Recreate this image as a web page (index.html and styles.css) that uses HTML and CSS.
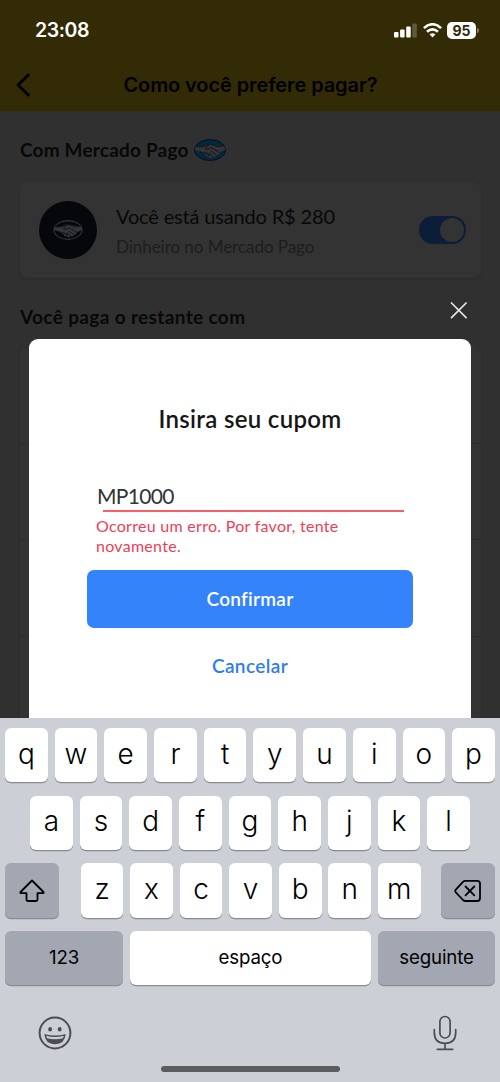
FILE: index.html
```html
<!DOCTYPE html>
<html lang="pt-BR">
<head>
<meta charset="utf-8">
<title>Como você prefere pagar?</title>
<link rel="stylesheet" href="styles.css">
</head>
<body>
<svg width="0" height="0" class="defs">
  <symbol id="handshake" viewBox="0 0 32 22">
    <path class="hands" d="M1.500 7C5 8.500 9.500 7.500 13 5.500C17 4 23 8 30.500 6.500L31 11L25.500 13.500C25.500 16 23 16.500 22.500 16C22 18 20 18.500 19 17.500C18 19.500 15.500 19.500 14.500 17.500C12.500 18.500 11.500 17 11.500 15.500C9.500 15 8 13 6 12.500L1 11Z"/>
    <path class="creases" d="M1.500 7C5 8.500 9 8 12 6.500C15 4.500 18 5.500 20 6.500C23 8 27 8 30.500 6.500M15 6L11 9.500C12 11 15 10 16.500 9L18 9L25.500 13.500M17 12L22.500 16M15 14L19 17.500M6 12.500L9.500 14.500L11 13L12 15L13.500 14L14 16L15.500 15.500L14.500 17.500"/>
  </symbol>
</svg>
<div class="screen">
  <header class="top">
    <div class="status">
      <span class="time">23:08</span>
      <div class="indicators">
        <svg width="23" height="15" viewBox="0 0 23 15" fill="#fff"><rect x="0" y="9" width="4.500" height="5.500" rx="1"/><rect x="6.100" y="6.500" width="4.500" height="8" rx="1"/><rect x="12.200" y="3.500" width="4.500" height="11" rx="1"/><rect x="18.300" y=".5" width="4.500" height="14" rx="1" opacity=".22"/></svg>
        <svg width="19" height="15" viewBox="0 0 19 15" fill="none" stroke="#fff" stroke-width="2.600"><path d="M.9 5.100Q9.500-2.600 18.100 5.100"/><path d="M4 8.700Q9.500 3.900 15 8.700"/><path d="M6.500 11.300L9.500 14.500L12.500 11.300Q9.500 9 6.500 11.300Z" fill="#fff" stroke="none"/></svg>
        <div class="battery"><span class="level">95</span><i class="tip"></i></div>
      </div>
    </div>
    <div class="nav">
      <svg class="back" width="16" height="24" viewBox="0 0 16 24"><path d="M13.300 2L3 12L13.300 22" fill="none" stroke="#000" stroke-width="2.900" stroke-linecap="round" stroke-linejoin="round"/></svg>
      <h1 class="nav-title">Como você prefere pagar?</h1>
    </div>
  </header>
  <main class="content">
    <h2 class="section mp">Com Mercado Pago
      <svg class="mp-logo" width="32" height="22" viewBox="0 0 32 22"><ellipse cx="16" cy="11" rx="15.500" ry="10.500" fill="#02283a" stroke="#080c28"/><use href="#handshake"/></svg>
    </h2>
    <section class="card balance">
      <div class="avatar"><svg width="30" height="22" viewBox="0 0 32 22"><ellipse cx="16" cy="11" rx="15" ry="10" fill="#05070b" stroke="#353535" stroke-width="1.200"/><use href="#handshake"/></svg></div>
      <div class="balance-text">
        <p class="using">Você está usando R$ 280</p>
        <p class="source">Dinheiro no Mercado Pago</p>
      </div>
      <div class="switch"><i class="knob"></i></div>
    </section>
    <h2 class="section rest">Você paga o restante com</h2>
    <section class="card options"><div class="option"></div><div class="option"></div><div class="option"></div><div class="option"></div></section>
  </main>
  <svg class="close" width="20" height="20" viewBox="0 0 20 20"><path d="M2 1.500L17.600 17.100M17.600 1.500L2 17.100" stroke="#e4e4e4" stroke-width="1.700"/></svg>
  <div class="modal">
    <h2 class="modal-title"><span>Insira seu cupom</span></h2>
    <div class="field"><span class="value">MP1000</span></div>
    <p class="error">Ocorreu um erro. Por favor, tente<br>novamente.</p>
    <button class="confirm">Confirmar</button>
    <button class="cancel">Cancelar</button>
  </div>
  <div class="keyboard">
    <div class="row"><span class="key">q</span><span class="key">w</span><span class="key">e</span><span class="key">r</span><span class="key">t</span><span class="key">y</span><span class="key">u</span><span class="key">i</span><span class="key">o</span><span class="key">p</span></div>
    <div class="row middle"><span class="key">a</span><span class="key">s</span><span class="key">d</span><span class="key">f</span><span class="key">g</span><span class="key">h</span><span class="key">j</span><span class="key">k</span><span class="key">l</span></div>
    <div class="row">
      <span class="key dark shift"><svg width="28" height="26" viewBox="0 0 28 26"><path d="M14 2.500L25.500 14Q26 15.200 25 15.200H19.500V21.500Q19.500 23 18 23H10Q8.500 23 8.500 21.500V15.200H3Q2 15.200 2.500 14Z" fill="none" stroke="#000" stroke-width="1.800" stroke-linejoin="round"/></svg></span>
      <span class="key">z</span><span class="key">x</span><span class="key">c</span><span class="key">v</span><span class="key">b</span><span class="key">n</span><span class="key">m</span>
      <span class="key dark erase"><svg width="28" height="24" viewBox="0 0 28 24" fill="none" stroke="#000" stroke-width="1.800" stroke-linecap="round" stroke-linejoin="round"><path d="M11.200 1.800H23.300Q26 1.800 26 4.500V19.300Q26 22 23.300 22H11.200Q10 22 9 21L1.800 13.300Q.6 12 1.800 10.700L9 2.800Q10 1.800 11.200 1.800Z"/><path d="M11.500 7.500L20.300 16.300M20.300 7.500L11.500 16.300"/></svg></span>
    </div>
    <div class="row bottom"><span class="key dark word num">123</span><span class="key word space">espaço</span><span class="key dark word next">seguinte</span></div>
    <div class="tools">
      <svg width="34" height="34" viewBox="0 0 34 34"><circle cx="17" cy="17" r="15.400" fill="none" stroke="#4b4d52" stroke-width="2"/><ellipse cx="12.100" cy="13.300" rx="1.900" ry="2.300" fill="#4b4d52"/><ellipse cx="21.700" cy="13.300" rx="1.900" ry="2.300" fill="#4b4d52"/><path d="M6.400 18Q17 21.200 27.600 18Q27 28.200 17 28.200T6.400 18Z" fill="#4b4d52"/><path d="M8.200 19.700Q17 22.100 25.800 19.700L25 22.300Q17 24 9 22.300Z" fill="#cbced5"/></svg>
      <svg width="26" height="36" viewBox="0 0 26 36" fill="none" stroke="#4b4d52" stroke-width="1.700" stroke-linecap="round"><rect x="7.900" y="1.500" width="10.200" height="21.500" rx="5.100"/><path d="M2.300 14.500V17.500Q2.300 28.300 13 28.300T23.700 17.500V14.500M13 28.300V34.300M5.300 34.300H20.700"/></svg>
    </div>
    <div class="home"></div>
  </div>
</div>
</body>
</html>
```
FILE: styles.css
```css
* { box-sizing: border-box; }
body { margin: 0; font-family: Inter, "Liberation Sans", sans-serif; }
h1, h2, p { margin: 0; font-weight: 400; }
.defs { display: none; }
.screen { position: relative; width: 500px; height: 1082px; overflow: hidden; background: #303030; }

.top { height: 111px; background: #332b06; }
.status { display: flex; justify-content: space-between; height: 60px; padding: 0 21px 0 35px; align-items: center; color: #fff; }
.time { font-size: 19.5px; font-weight: 600; letter-spacing: -.4px; }
.indicators { display: flex; align-items: center; gap: 5.5px; }
.battery { display: flex; align-items: center; gap: 1px; }
.level { width: 29px; height: 17px; border-radius: 5px; background: #fff; color: #332b06; font-size: 14px; line-height: 17px; font-weight: 700; text-align: center; }
.tip { width: 2px; height: 5px; border-radius: 0 2px 2px 0; background: #858064; }
.nav { display: flex; align-items: center; height: 50px; padding-left: 15px; }
.nav-title { width: 470px; padding-right: 30px; text-align: center; color: #000; font-size: 20px; font-weight: 600; letter-spacing: -.1px; }
.back { flex: none; }

.content { padding: 23px 19px 0 20px; font-family: Lato, sans-serif; color: #080808; }
.section { display: flex; align-items: center; gap: 5px; height: 31px; font-size: 19px; font-weight: 700; letter-spacing: .2px; }
.rest { letter-spacing: .36px; }
.card { border-radius: 8px; background: #333; box-shadow: 0 1px 2px #2a2a2a; }
.balance { display: flex; align-items: center; height: 96px; margin: 17px 0 23px; padding: 0 15px 0 19px; }
.avatar { display: flex; align-items: center; justify-content: center; width: 58px; height: 58px; border-radius: 50%; background: #05070b; }
.balance-text { flex: 1; margin-left: 19px; white-space: nowrap; }
.using { font-size: 20px; line-height: 26px; padding-top: 1px; letter-spacing: -.16px; }
.source { font-size: 17px; line-height: 24px; padding-top: 6px; color: #1d1d1d; letter-spacing: -.04px; }
.switch { width: 47px; height: 28px; padding: 2px; border-radius: 14px; background: #0b1d39; display: flex; justify-content: flex-end; }
.knob { width: 24px; height: 24px; border-radius: 50%; background: #333; }
.options { margin-top: 15px; }
.option { height: 96.5px; border-bottom: 1px solid #2b2b2b; }
.hands { fill: #353535; }
.creases { fill: none; stroke: #080c18; stroke-width: .8; stroke-linejoin: round; }

.close { position: absolute; left: 449px; top: 301px; }
.modal { position: absolute; left: 29px; top: 339px; width: 442px; height: 390px; padding: 64px 58px 0; border-radius: 9px; background: #fff; font-family: Lato, sans-serif; display: flex; flex-direction: column; }
.modal-title { text-align: center; color: #161616; font-size: 24px; line-height: 32px; font-weight: 600; letter-spacing: .3px; }
.field { height: 31px; margin: 46px 9px 0 16px; border-bottom: 2px solid #f95e69; }
.value { display: block; margin-left: -6px; color: #333; font-size: 21px; line-height: 30px; letter-spacing: -.7px; }
.error { margin: 4px 0 0 9px; color: #ed4058; font-size: 16px; line-height: 20px; letter-spacing: .28px; white-space: nowrap; }
.confirm { height: 58px; margin-top: 14px; padding: 0 0 2px; border: 0; border-radius: 7px; background: #3483fa; color: #fff; font: 600 19px Lato, sans-serif; letter-spacing: .25px; }
.cancel { height: 40px; margin-top: 17px; padding: 0; border: 0; background: transparent; color: #2f7cf0; font: 600 19px Lato, sans-serif; letter-spacing: .4px; }

.keyboard { position: absolute; left: 0; top: 718px; width: 500px; height: 364px; padding: 10px 5px 0; background: #cccfd6; display: flex; flex-direction: column; }
.row { display: flex; justify-content: space-between; margin-bottom: 13.3px; }
.middle { padding: 0 25px; }
.key { display: flex; align-items: center; justify-content: center; width: 42.7px; height: 54.4px; padding-bottom: 3px; border-radius: 6px; background: #fff; box-shadow: 0 1.3px 0 #898b91; font-size: 28px; font-weight: 300; color: #000; }
.dark { background: #a3a7b2; }
.shift { width: 54px; margin-right: 14.8px; }
.erase { width: 54px; margin-left: 13.5px; }
.shift, .erase { padding: 0; }
.word { padding-bottom: 1px; font-size: 18.7px; font-weight: 400; letter-spacing: -.15px; }
.num { width: 118px; }
.space { width: 241px; }
.next { width: 117px; }
.tools { display: flex; justify-content: space-between; align-items: center; padding: 0 37px 0 33px; margin-top: 16px; height: 36px; }
.home { width: 179px; height: 6px; margin: 15px auto 0; border-radius: 3px; background: #5b5c5c; }
```
